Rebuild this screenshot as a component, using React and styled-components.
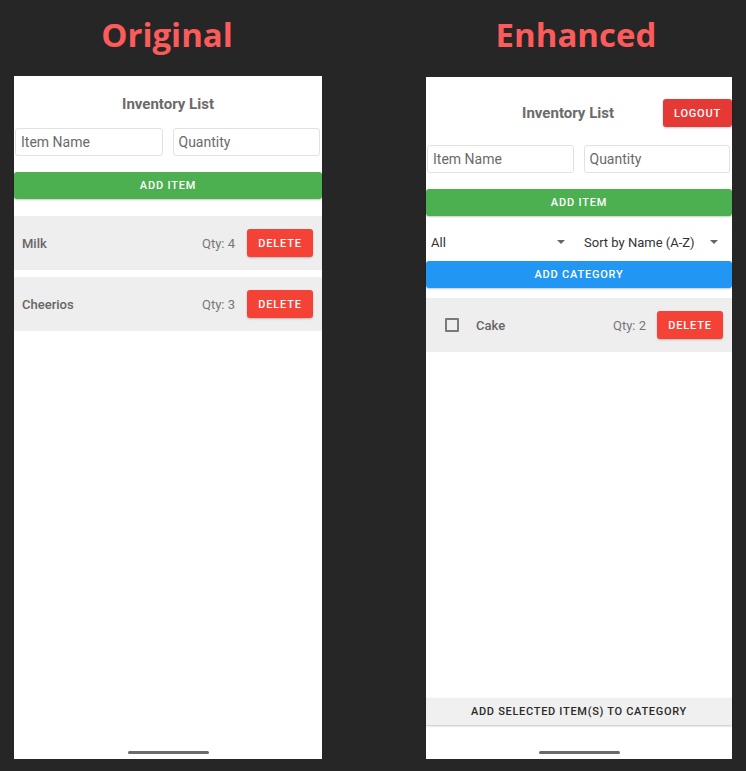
import React from 'react';
import styled, { createGlobalStyle } from 'styled-components';

const GlobalStyle = createGlobalStyle`
  html, body {
    margin: 0;
    padding: 0;
    background: #262626;
  }
  body {
    font-family: Roboto, "Liberation Sans", sans-serif;
  }
`;

const Stage = styled.div`
  width: 746px;
  height: 771px;
  display: flex;
  gap: 104px;
  padding-left: 14px;
  box-sizing: border-box;
  background: #262626;
`;

const Column = styled.div`
  width: ${(p) => p.width}px;
  display: flex;
  flex-direction: column;
`;

const Heading = styled.h1`
  margin: 0;
  height: ${(p) => p.height}px;
  padding-top: 13px;
  box-sizing: border-box;
  text-align: center;
  font-family: "Open Sans", sans-serif;
  font-weight: 700;
  font-size: 33px;
  line-height: 44px;
  color: #fb5b5b;
  transform: translateX(${(p) => p.shift || 0}px);
`;

const Phone = styled.div`
  height: ${(p) => p.height}px;
  background: #ffffff;
  display: flex;
  flex-direction: column;
`;

const Title = styled.div`
  font-size: 15px;
  font-weight: 700;
  color: #6b6b6b;
  line-height: 20px;
  text-align: center;
  padding-top: ${(p) => p.top || 0}px;
`;

const Header = styled.div`
  display: flex;
  justify-content: flex-end;
  align-items: center;
  gap: 49px;
  padding-top: 22px;
`;

const InputRow = styled.div`
  display: grid;
  grid-template-columns: 1fr 1fr;
  gap: 10px;
  padding: 0 2px 0 1px;
  margin-top: ${(p) => p.top}px;
`;

const Input = styled.input`
  height: 28px;
  box-sizing: border-box;
  border: 1px solid #e2e2e2;
  border-radius: 3px;
  padding: 0 5px;
  font-family: Roboto, sans-serif;
  font-size: 14px;
  color: #555;
  min-width: 0;
  outline: none;
  &::placeholder {
    color: #6a6a6a;
  }
`;

const Button = styled.button`
  display: flex;
  align-items: center;
  justify-content: center;
  height: ${(p) => p.h || 27}px;
  width: ${(p) => (p.w ? `${p.w}px` : '100%')};
  flex-shrink: 0;
  margin-top: ${(p) => p.top || 0}px;
  border: none;
  border-radius: 3px;
  background: ${(p) => p.bg};
  color: ${(p) => p.fg || '#ffffff'};
  font-family: Roboto, sans-serif;
  font-weight: 500;
  font-size: 11px;
  letter-spacing: 0.8px;
  text-transform: uppercase;
  box-shadow: 0 1px 2px rgba(0, 0, 0, 0.22);
  padding: 0;
`;

const PickerRow = styled.div`
  display: grid;
  grid-template-columns: 1fr 1fr;
  gap: 5px;
  height: 45px;
  padding-right: 5px;
`;

const Picker = styled.div`
  display: flex;
  align-items: center;
  justify-content: space-between;
  padding: 7px 9px 0 5px;
  font-size: 13px;
  color: #333;
`;

const Caret = styled.span`
  width: 0;
  height: 0;
  border-left: 4px solid transparent;
  border-right: 4px solid transparent;
  border-top: 4px solid #666;
`;

const List = styled.div`
  display: flex;
  flex-direction: column;
  gap: 7px;
  margin-top: ${(p) => p.top}px;
  flex: 1;
`;

const Row = styled.div`
  display: flex;
  align-items: center;
  height: 54px;
  background: #eeeeee;
  padding: 0 9px 0 ${(p) => p.left}px;
`;

const Check = styled.span`
  width: 14px;
  height: 14px;
  box-sizing: border-box;
  border: 2px solid #7a7a7a;
  border-radius: 1px;
  margin-right: 17px;
`;

const Name = styled.span`
  flex: 1;
  font-size: 13px;
  font-weight: 500;
  color: #666;
`;

const Qty = styled.span`
  font-size: 13px;
  color: #777;
  margin-right: ${(p) => p.gap}px;
`;

const BottomAction = styled.div`
  height: 27px;
  display: flex;
  align-items: center;
  justify-content: center;
  background: #f0f0f0;
  box-shadow: 0 1px 2px rgba(0, 0, 0, 0.25);
  font-size: 11px;
  font-weight: 500;
  letter-spacing: 0.7px;
  color: #2a2a2a;
`;

const HomeBar = styled.div`
  width: 81px;
  height: 3px;
  border-radius: 2px;
  background: #6b6b6b;
  margin: ${(p) => p.top}px auto 5px;
  flex-shrink: 0;
`;

const Original = () => (
  <Column width={308}>
    <Heading height={76} shift={-1}>Original</Heading>
    <Phone height={683}>
      <Title top={18}>Inventory List</Title>
      <InputRow top={14}>
        <Input placeholder="Item Name" />
        <Input placeholder="Quantity" />
      </InputRow>
      <Button bg="#4caf50" top={16}>Add Item</Button>
      <List top={17}>
        <Row left={8}>
          <Name>Milk</Name>
          <Qty gap={12}>Qty: 4</Qty>
          <Button bg="#f44336" w={66} h={28}>Delete</Button>
        </Row>
        <Row left={8}>
          <Name>Cheerios</Name>
          <Qty gap={12}>Qty: 3</Qty>
          <Button bg="#f44336" w={66} h={28}>Delete</Button>
        </Row>
      </List>
      <HomeBar top={0} />
    </Phone>
  </Column>
);

const Enhanced = () => (
  <Column width={306}>
    <Heading height={77} shift={-3}>Enhanced</Heading>
    <Phone height={682}>
      <Header>
        <Title>Inventory List</Title>
        <Button bg="#e53935" w={69} h={28}>Logout</Button>
      </Header>
      <InputRow top={18}>
        <Input placeholder="Item Name" />
        <Input placeholder="Quantity" />
      </InputRow>
      <Button bg="#4caf50" top={16}>Add Item</Button>
      <PickerRow>
        <Picker>
          All
          <Caret />
        </Picker>
        <Picker>
          Sort by Name (A-Z)
          <Caret />
        </Picker>
      </PickerRow>
      <Button bg="#2196f3">Add Category</Button>
      <List top={10}>
        <Row left={19}>
          <Check />
          <Name>Cake</Name>
          <Qty gap={11}>Qty: 2</Qty>
          <Button bg="#f44336" w={66} h={28}>Delete</Button>
        </Row>
      </List>
      <BottomAction>ADD SELECTED ITEM(S) TO CATEGORY</BottomAction>
      <HomeBar top={26} />
    </Phone>
  </Column>
);

export default function App() {
  return (
    <>
      <GlobalStyle />
      <Stage>
        <Original />
        <Enhanced />
      </Stage>
    </>
  );
}
